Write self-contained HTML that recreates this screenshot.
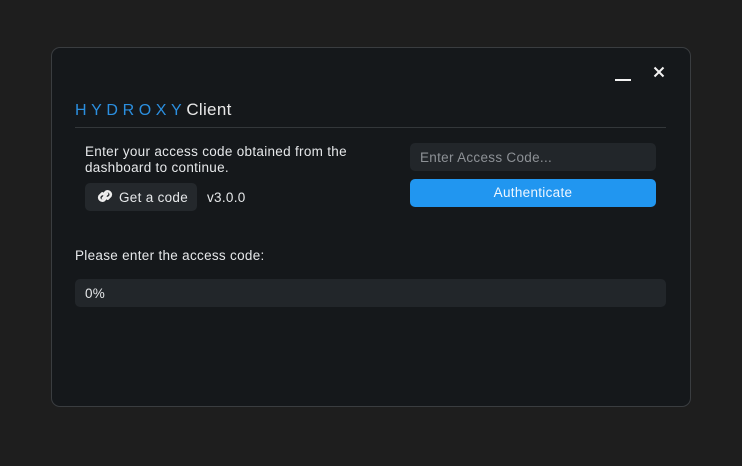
<!DOCTYPE html>
<html><head><style>
*{margin:0;padding:0;box-sizing:border-box}
body{width:742px;height:466px;background:#1e1e1e;font-family:"Liberation Sans",sans-serif;position:relative;overflow:hidden}
.win{position:absolute;left:51px;top:47px;width:640px;height:360px;background:#15181b;border:1px solid #3a3d40;border-radius:9px}
.t{position:absolute;color:#e6e8ea;font-size:13.5px;letter-spacing:.3px;white-space:nowrap}
</style></head><body>
<div class="win"></div>
<div style="position:absolute;left:615px;top:79px;width:16px;height:2px;background:#f2f2f2"></div>
<svg style="position:absolute;left:653px;top:66px" width="12" height="12"><path d="M1.5 1.5L10.5 10.5M10.5 1.5L1.5 10.5" stroke="#f2f2f2" stroke-width="2"/></svg>
<div class="t" style="left:75px;top:100px;font-size:16px;letter-spacing:0"><span style="color:#2b8fe0;letter-spacing:4.6px">HYDROXY</span><span style="color:#e8e8e8;font-size:17px;letter-spacing:.3px">Client</span></div>
<div style="position:absolute;left:75px;top:127px;width:591px;height:1px;background:#33373a"></div>
<div class="t" style="left:85px;top:144px;line-height:16px">Enter your access code obtained from the<br>dashboard to continue.</div>
<div style="position:absolute;left:85px;top:183px;width:112px;height:28px;background:#24282c;border-radius:5px"></div>
<svg style="position:absolute;left:94px;top:186px" width="22" height="20" viewBox="0 0 20 18"><g fill="none" stroke="#eee" stroke-width="2.2" stroke-linecap="round"><path d="M8 11 L12 7"/><path d="M7.5 6.5 L5 9 a3 3 0 0 0 4 4 L11.5 10.5"/><path d="M12.5 11.5 L15 9 a3 3 0 0 0 -4 -4 L8.5 7.5"/></g></svg>
<div class="t" style="left:119px;top:190px">Get a code</div>
<div class="t" style="left:207px;top:190px">v3.0.0</div>
<div style="position:absolute;left:410px;top:143px;width:246px;height:28px;background:#22262a;border-radius:5px"></div>
<div class="t" style="left:420px;top:150px;color:#8d9196">Enter Access Code...</div>
<div style="position:absolute;left:410px;top:179px;width:246px;height:28px;background:#2196f0;border-radius:5px;color:#eef6ff;font-size:13.5px;letter-spacing:.3px;text-align:center;line-height:28px">Authenticate</div>
<div class="t" style="left:75px;top:248px">Please enter the access code:</div>
<div style="position:absolute;left:75px;top:279px;width:591px;height:28px;background:#22262a;border-radius:5px"></div>
<div class="t" style="left:85px;top:286px">0%</div>
</body></html>
